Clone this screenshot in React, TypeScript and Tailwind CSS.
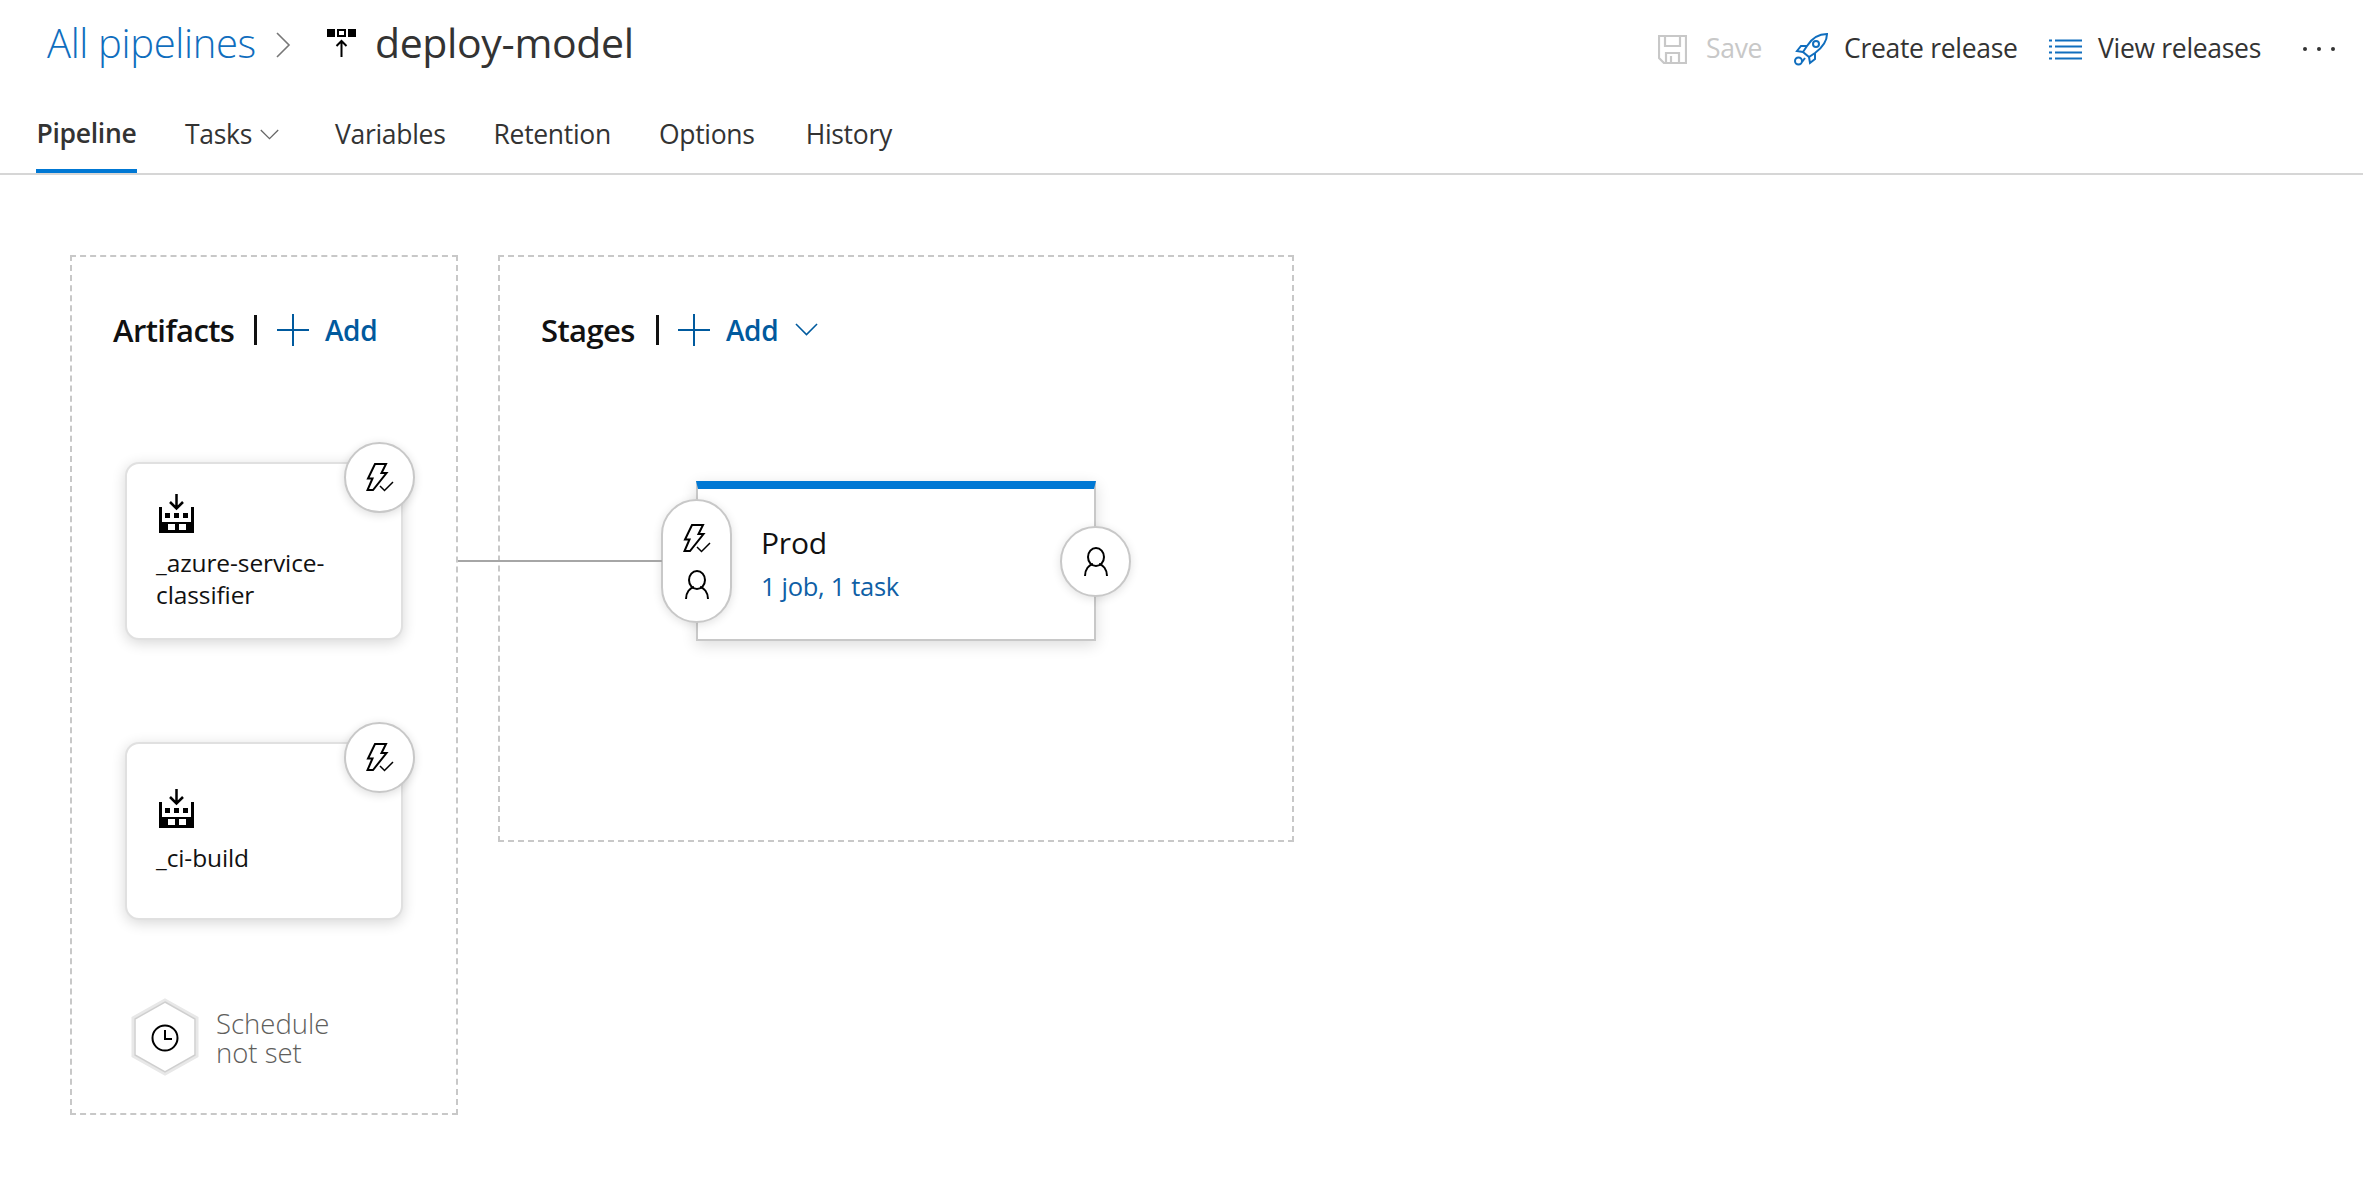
import React from "react";

const font = { fontFamily: '"Open Sans", "Noto Sans", sans-serif' };

function Bolt({ className = "" }: { className?: string }) {
  return (
    <svg className={className} width="28" height="29" viewBox="0 0 28 29" fill="none" stroke="#000" strokeWidth="2">
      <path d="M9 1H20L15.5 10H20.5L7 27H1.5L6.5 15.5H2Z" />
      <path d="M14 23L18.5 27.5L27 19" strokeWidth="1.5" />
    </svg>
  );
}

function Person() {
  return (
    <svg width="24" height="29" viewBox="0 0 24 29" fill="none" stroke="#000" strokeWidth="2">
      <ellipse cx="12" cy="10" rx="8" ry="9" />
      <path d="M1 29C1 22 5 18 9 17M23 29C23 22 19 18 15 17" />
    </svg>
  );
}

function Factory() {
  return (
    <svg width="35" height="41" viewBox="0 0 35 41" fill="#000">
      <path d="M17.5 1V15M11 9L17.5 15.5L24 9" fill="none" stroke="#000" strokeWidth="2.5" />
      <path d="M0 14H3V29H32V14H35V40H0Z" />
      <rect x="6" y="20" width="5" height="5" />
      <rect x="15" y="20" width="5" height="5" />
      <rect x="24" y="20" width="5" height="5" />
      <rect x="9" y="31" width="7" height="6" fill="#fff" />
      <rect x="20" y="31" width="7" height="6" fill="#fff" />
    </svg>
  );
}

function Plus() {
  return (
    <svg width="32" height="32" viewBox="0 0 32 32" stroke="#005a9e" strokeWidth="2" className="shrink-0">
      <path d="M16 0V32M0 16H32" />
    </svg>
  );
}

function Chevron({ w, color }: { w: number; color: string }) {
  return (
    <svg width={w} height={w / 2 + 2} viewBox="0 0 24 14" fill="none" stroke={color} strokeWidth="1.6">
      <path d="M1 1L12 12L23 1" />
    </svg>
  );
}

function ArtifactCard({ lines, pad }: { lines: string[]; pad: string }) {
  return (
    <div className={`relative w-[278px] h-[178px] bg-white rounded-[14px] border-2 border-[#e0e0e0] shadow-[0_3px_14px_rgba(0,0,0,0.16)] pl-[29px] ${pad}`}>
      <div className="ml-[3px]"><Factory /></div>
      <div className="mt-[13px] text-[24.5px] leading-[32px] tracking-[-0.1px] text-[#111]">
        {lines.map((l) => (
          <div key={l}>{l}</div>
        ))}
      </div>
      <div className="absolute top-[-22px] right-[-14px] w-[71px] h-[71px] rounded-full bg-white border-2 border-[#c8c8c8] shadow-[0_2px_10px_rgba(0,0,0,0.14)] flex items-center justify-center">
        <Bolt />
      </div>
    </div>
  );
}

export default function App() {
  return (
    <div style={font} className="relative w-[2363px] h-[1186px] bg-white overflow-hidden text-[#333]">
      <header className="h-[88px] flex items-center justify-between pl-[47px] pr-[28px]">
        <div className="flex items-center mt-[-2px]">
          <span className="text-[40px] font-light text-[#106ebe] tracking-[-0.35px]">All pipelines</span>
          <svg className="ml-[20px] mt-[4px]" width="15" height="26" viewBox="0 0 15 26" fill="none" stroke="#777" strokeWidth="1.6">
            <path d="M1 1L13 13L1 25" />
          </svg>
          <svg className="ml-[36px]" width="30" height="29" viewBox="0 0 30 29">
            <rect x="0" y="0" width="8" height="8" fill="#000" />
            <rect x="11" y="1" width="7" height="6" fill="#fff" stroke="#000" strokeWidth="2" />
            <rect x="21" y="0" width="8" height="8" fill="#000" />
            <path d="M14.5 28V12M9.5 17L14.5 12L19.5 17" fill="none" stroke="#000" strokeWidth="2" />
          </svg>
          <span className="ml-[18px] text-[41px] text-[#333] tracking-[-0.35px]">deploy-model</span>
        </div>
        <div className="flex items-center text-[26.5px] mt-[10px]">
          <svg width="29" height="29" viewBox="0 0 29 29" fill="none" stroke="#c8c8c8" strokeWidth="2.2">
            <path d="M1 1H28V28H6L1 23ZM7 1V11H22V1M8 28V18H21V28M13 21V28" />
          </svg>
          <span className="ml-[19px] text-[#c8c8c8] w-[56px] tracking-[-0.3px]">Save</span>
          <svg className="ml-[32px]" width="34" height="33" viewBox="0 0 34 33" fill="none" stroke="#106ebe" strokeWidth="2">
            <path d="M33 1C25 1 18 5 13 13L9 19L15 24L21 20C29 14 33 8 33 1Z" />
            <circle cx="22" cy="11" r="3" />
            <path d="M13 13H7L3 18L9 19M21 20V26L16 30L15 24" />
            <circle cx="4.5" cy="28" r="3.5" />
            <path d="M11 25L8 29" />
          </svg>
          <span className="ml-[16px] w-[175px] whitespace-nowrap tracking-[-0.3px]">Create release</span>
          <svg className="ml-[30px]" width="33" height="21" viewBox="0 0 33 21" stroke="#106ebe" strokeWidth="2">
            <path d="M6 1.5H33M6 7.5H33M6 13.5H33M6 19.5H33" />
            <path d="M0 1.5H3M0 7.5H3M0 13.5H3M0 19.5H3" />
          </svg>
          <span className="ml-[16px] w-[166px] whitespace-nowrap tracking-[-0.3px]">View releases</span>
          <div className="ml-[39px] flex gap-[10px]">
            <span className="w-[4px] h-[4px] rounded-full bg-[#333]" />
            <span className="w-[4px] h-[4px] rounded-full bg-[#333]" />
            <span className="w-[4px] h-[4px] rounded-full bg-[#333]" />
          </div>
        </div>
      </header>

      <nav className="h-[87px] border-b-2 border-[#d6d6d6] pl-[36px] flex items-stretch text-[26.5px] tracking-[-0.3px]">
        <div className="w-[101px] font-semibold border-b-[4px] border-[#0078d4] h-[85px] pt-[10px] flex items-center justify-center whitespace-nowrap text-[#333]">Pipeline</div>
        <div className="ml-[48px] pt-[8px] flex items-center whitespace-nowrap">
          Tasks
          <span className="ml-[8px]"><Chevron w={19} color="#666" /></span>
        </div>
        <div className="ml-[56px] pt-[8px] flex items-center">Variables</div>
        <div className="ml-[48px] pt-[8px] flex items-center">Retention</div>
        <div className="ml-[48px] pt-[8px] flex items-center">Options</div>
        <div className="ml-[51px] pt-[8px] flex items-center">History</div>
      </nav>

      <main className="relative flex items-start pl-[70px] pt-[80px] gap-[40px]">
        <section className="w-[388px] h-[860px] border-2 border-dashed border-[#c8c8c8] pl-[41px] pt-[56px]">
          <div className="flex items-center h-[34px]">
            <span className="text-[31px] font-semibold text-[#111] tracking-[-0.6px] w-[121px] whitespace-nowrap">Artifacts</span>
            <span className="ml-[20px] w-[3px] h-[30px] bg-[#111]" />
            <span className="ml-[20px]"><Plus /></span>
            <span className="ml-[16px] text-[28px] font-semibold text-[#005a9e] tracking-[-0.4px]">Add</span>
          </div>
          <div className="ml-[12px] mt-[115px]">
            <ArtifactCard lines={["_azure-service-", "classifier"]} pad="pt-[29px]" />
            <div className="mt-[102px]">
              <ArtifactCard lines={["_ci-build"]} pad="pt-[44px]" />
            </div>
            <div className="ml-[6px] mt-[78px] flex items-center">
              <svg width="68" height="78" viewBox="0 0 68 78" fill="none">
                <path d="M34 2L66 20V58L34 76L2 58V20Z" fill="#fff" stroke="#e8e8e8" strokeWidth="3" />
                <path d="M34 4L64 21V57L34 74L4 57V21Z" stroke="#cfcfcf" strokeWidth="1.5" />
                <circle cx="34" cy="40" r="12.5" stroke="#000" strokeWidth="2" />
                <path d="M34 32V41H41" stroke="#000" strokeWidth="2" />
              </svg>
              <div className="ml-[17px] w-[130px] text-[27.5px] leading-[29px] font-light text-[#605e5c] mt-[2px]">
                Schedule not set
              </div>
            </div>
          </div>
        </section>

        <section className="w-[796px] h-[587px] border-2 border-dashed border-[#c8c8c8] pl-[41px] pt-[56px]">
          <div className="flex items-center h-[34px]">
            <span className="text-[31px] font-semibold text-[#111] tracking-[-0.6px] w-[95px] whitespace-nowrap">Stages</span>
            <span className="ml-[20px] w-[3px] h-[30px] bg-[#111]" />
            <span className="ml-[19px]"><Plus /></span>
            <span className="ml-[16px] text-[28px] font-semibold text-[#005a9e] tracking-[-0.4px]">Add</span>
            <span className="ml-[17px]"><Chevron w={23} color="#005a9e" /></span>
          </div>
          <div className="ml-[155px] mt-[134px] relative w-[400px] h-[160px] bg-white border-x-2 border-b-2 border-[#c8c8c8] border-t-[8px] border-t-[#0078d4] shadow-[0_4px_14px_rgba(0,0,0,0.14)] pl-[63px] pt-[34px]">
            <div className="text-[30px] leading-[40px] text-[#111] tracking-[-0.2px]">Prod</div>
            <div className="mt-[7px] text-[25.5px] leading-[32px] text-[#0f5fa6] tracking-[-0.3px]">1 job, 1 task</div>
            <div className="absolute left-[-37px] top-[10px] w-[71px] h-[124px] rounded-full bg-white border-2 border-[#c8c8c8] shadow-[0_2px_10px_rgba(0,0,0,0.12)] flex flex-col items-center justify-center gap-[17px]">
              <Bolt />
              <Person />
            </div>
            <div className="absolute right-[-37px] top-[37px] w-[71px] h-[71px] rounded-full bg-white border-2 border-[#c8c8c8] shadow-[0_2px_10px_rgba(0,0,0,0.12)] flex items-center justify-center">
              <Person />
            </div>
          </div>
        </section>

        <div className="absolute left-[458px] top-[385px] w-[204px] h-[2px] bg-[#a6a6a6]" />
      </main>
    </div>
  );
}
